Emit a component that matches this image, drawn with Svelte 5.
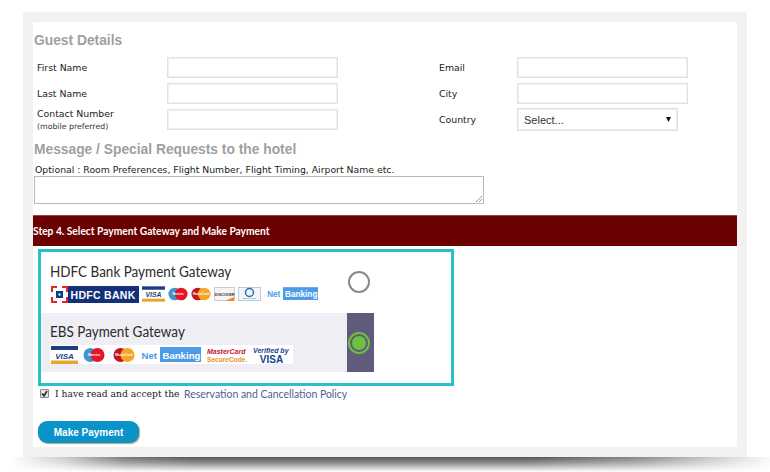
<script>
  const left = [
    { label: 'First Name' },
    { label: 'Last Name' },
    { label: 'Contact Number', note: '(mobile preferred)' }
  ];
  const right = ['Email', 'City'];
</script>

{#snippet visa(w, h)}
  <svg class="logo" width={w} height={h} viewBox="0 0 27 18">
    <rect width="27" height="18" fill="#fff" />
    <rect y="0" width="27" height="4" fill="#1a3f7c" />
    <rect y="14.5" width="27" height="3.5" fill="#e8a72c" />
    <text x="13.5" y="12.5" text-anchor="middle" class="visa-t">VISA</text>
  </svg>
{/snippet}

{#snippet maestro(w)}
  <svg class="logo" width={w} height="18" viewBox="0 0 22 18">
    <circle cx="7.5" cy="9" r="7" fill="#3b97cc" />
    <circle cx="14.5" cy="9" r="7" fill="#e8132a" />
    <text x="11" y="10.2" text-anchor="middle" class="card-t">Maestro</text>
  </svg>
{/snippet}

{#snippet master(w)}
  <svg class="logo" width={w} height="18" viewBox="0 0 22 18">
    <circle cx="7.5" cy="9" r="7" fill="#c5141c" />
    <circle cx="14.5" cy="9" r="7" fill="#f5a623" />
    <text x="11" y="10.2" text-anchor="middle" class="card-t">MasterCard</text>
  </svg>
{/snippet}

{#snippet netbank(w, h)}
  <svg class="logo" width={w} height={h} viewBox="0 0 62 18">
    <rect width="62" height="18" fill="#fff" />
    <rect x="21" y="1" width="41" height="15" fill="#4d9be8" />
    <text x="2.5" y="12.5" class="nb-a">Net</text>
    <text x="23.5" y="12.5" class="nb-b">Banking</text>
  </svg>
{/snippet}

<div class="page">
  <main class="frame">
    <section class="guest">
      <h2>Guest Details</h2>
      <div class="columns">
        <div class="col-left">
          {#each left as row}
            <div class="row-left">
              <label>
                <span>{row.label}</span>
                {#if row.note}<small>{row.note}</small>{/if}
              </label>
              <input type="text" />
            </div>
          {/each}
        </div>
        <div class="col-right">
          {#each right as label}
            <div class="row-right">
              <label>{label}</label>
              <input type="text" />
            </div>
          {/each}
          <div class="row-right">
            <label>Country</label>
            <div class="select">
              <span>Select...</span>
              <svg width="5" height="5" viewBox="0 0 5 5"><path d="M0 0h5L2.5 5z" fill="#111" /></svg>
            </div>
          </div>
        </div>
      </div>
      <h2 class="msg">Message / Special Requests to the hotel</h2>
      <p class="optional">Optional : Room Preferences, Flight Number, Flight Timing, Airport Name etc.</p>
      <div class="textarea">
        <svg width="8" height="8" viewBox="0 0 8 8"><path d="M1 7L7 1M4 7L7 4" stroke="#999" stroke-width="1" /></svg>
      </div>
    </section>

    <h3 class="step"><span>Step 4. Select Payment Gateway and Make Payment</span></h3>

    <section class="gateways">
      <div class="gw gw-a">
        <div class="gw-info">
          <div class="gw-title">HDFC Bank Payment Gateway</div>
          <div class="strip strip-a">
            <svg class="logo" width="88" height="17" viewBox="0 0 88 17">
              <rect width="17" height="17" fill="#fff" />
              <path d="M0 0h6v2H2v4H0zM11 0h6v6h-2V2h-4zM0 11h2v4h4v2H0zM15 11h2v6h-6v-2h4z" fill="#e3242b" />
              <rect x="5" y="5" width="7" height="7" fill="#103a84" />
              <rect x="7.5" y="7.5" width="2" height="2" fill="#fff" />
              <rect x="17" width="71" height="17" fill="#14307a" />
              <text x="19.5" y="12.8" class="hdfc-t">HDFC BANK</text>
            </svg>
            {@render visa(23, 16)}
            {@render maestro(20)}
            {@render master(20)}
            <svg class="logo" width="21" height="16" viewBox="0 0 21 16">
              <rect x=".5" y="1.5" width="20" height="13" fill="#f4f4f4" stroke="#ccc" />
              <text x="10.5" y="9.6" text-anchor="middle" class="disc-t">DISCOVER</text>
              <path d="M11 15L20 11V15z" fill="#ee8a1c" />
            </svg>
            <svg class="logo" width="23" height="16" viewBox="0 0 23 16">
              <rect x=".5" y="1.5" width="22" height="13" fill="#f2f6fa" stroke="#bcd" />
              <circle cx="11.5" cy="6.5" r="4" fill="none" stroke="#2a6ea8" stroke-width="1.5" />
              <text x="11.5" y="13" text-anchor="middle" class="din-t">Diners Club</text>
            </svg>
            <span class="nudge1">{@render netbank(53, 16)}</span>
          </div>
        </div>
        <div class="gw-radio">
          <span class="radio"></span>
        </div>
      </div>
      <div class="gw gw-b">
        <div class="gw-info">
          <div class="gw-title">EBS Payment Gateway</div>
          <div class="strip strip-b">
            {@render visa(27, 18)}
            {@render maestro(22)}
            <span class="nudge8">{@render master(22)}</span>
            <span class="nudge4">{@render netbank(62, 18)}</span>
            <span class="nudge6">
              <svg class="logo" width="40" height="18" viewBox="0 0 40 18">
                <text x="0" y="8" class="msc-a">MasterCard</text>
                <text x="0" y="16" class="msc-b">SecureCode.</text>
              </svg>
            </span>
            <span class="nudge6">
              <svg class="logo" width="37" height="18" viewBox="0 0 37 18">
                <text x="0" y="7" class="vbv-a">Verified by</text>
                <text x="18.5" y="16.5" text-anchor="middle" class="vbv-b">VISA</text>
              </svg>
            </span>
          </div>
        </div>
        <div class="gw-radio on">
          <span class="radio sel"><i></i></span>
        </div>
      </div>
    </section>

    <div class="accept">
      <span class="check">
        <svg width="7" height="7" viewBox="0 0 7 7"><path d="M1 3.5L3 5.8L6 1" fill="none" stroke="#222" stroke-width="1.6" /></svg>
      </span>
      <span class="accept-text">I have read and accept the</span>
      <a href="#policy">Reservation and Cancellation Policy</a>
    </div>

    <button class="pay">Make Payment</button>
  </main>
  <div class="shadow"></div>
</div>

<style>
  :global(body) { margin: 0; background: #fff; }
  .page { width: 770px; height: 472px; overflow: hidden; box-sizing: border-box; padding: 12px 23px 0; font-family: "DejaVu Sans", sans-serif; }
  .frame { box-sizing: border-box; width: 724px; height: 445px; border: 10px solid #f2f2f2; background: #fff; }
  .shadow { height: 15px; margin: 0 -30px 0 -13px; background: linear-gradient(to bottom, rgba(255,255,255,0) 0, rgba(255,255,255,.35) 40%, #fff 100%), linear-gradient(to right, #fff 0, #ccc 7%, #777 15%, #555 24%, #555 68%, #888 82%, #ccc 92%, #fff 100%); }

  .guest { height: 193px; box-sizing: border-box; padding: 11px 0 0 1px; }
  h2 { margin: 0; font: bold 13.8px/16px "Liberation Sans", sans-serif; color: #9f9f9f; }
  .columns { display: flex; margin-top: 8px; }
  .col-left { width: 405px; display: flex; flex-direction: column; gap: 5px; }
  .col-right { display: flex; flex-direction: column; gap: 5px; }
  .row-left, .row-right { display: flex; align-items: center; height: 21px; }
  label { display: block; font-size: 9.35px; line-height: 12px; color: #222; }
  label small { display: block; font-size: 7.8px; line-height: 11px; color: #333; margin-top: 1px; }
  label span { display: block; }
  .row-left label { width: 130px; padding-left: 3px; box-sizing: border-box; margin-right: 3px; }
  .row-right label { width: 78px; }
  input { box-sizing: border-box; width: 171px; height: 21px; border: 1px solid #e2e2e2; outline: 1px solid #f0f0f0; outline-offset: -2px; background: #fff; padding: 0; }
  .select { box-sizing: border-box; width: 161px; height: 23px; display: flex; align-items: center; justify-content: space-between; padding: 0 6px 0 6px; border: 1px solid #dfdfdf; outline: 1px solid #f0f0f0; outline-offset: -2px; font: 11px "Liberation Sans", sans-serif; color: #333; }
  .msg { margin-top: 12px; }
  .optional { margin: 6px 0 0 1px; font-size: 9.3px; line-height: 12px; color: #222; }
  .textarea { box-sizing: border-box; width: 450px; height: 28px; margin-top: 0; border: 1px solid #b8b8b8; display: flex; align-items: flex-end; justify-content: flex-end; }

  .step { margin: 0; height: 31px; box-sizing: border-box; background: #6b0000; border-top: 1px solid #8c4a4a; color: #fff; font: bold 11.5px/30px Lato, sans-serif; }
  .step span { display: inline-block; transform: scaleX(.89); transform-origin: 0 50%; white-space: nowrap; }

  .gateways { box-sizing: border-box; width: 416px; height: 137px; margin: 3px 0 0 5px; border: 3px solid #2bc0c9; background: #fff; }
  .gw { display: flex; }
  .gw-a { height: 61px; }
  .gw-b { height: 59px; }
  .gw-info { width: 306px; box-sizing: border-box; padding-left: 9px; }
  .gw-b .gw-info { background: #eeeef4; }
  .gw-title { font: 14.5px/18px Lato, sans-serif; color: #2c2c2c; padding-top: 11px; transform: scaleX(.93); transform-origin: 0 50%; white-space: nowrap; }
  .gw-b .gw-title { padding-top: 10px; }
  .strip { display: flex; align-items: center; background: #fff; box-sizing: border-box; padding-left: 1px; }
  .strip-a { margin-top: 4px; height: 18px; width: 268px; gap: 3px; }
  .strip-b { margin-top: 4px; height: 19px; width: 243px; gap: 5px; }
  .strip span { display: block; }
  .nudge1 { margin-left: 1px; }
  .nudge8 { margin-left: 3px; }
  .nudge4 { margin-left: -1px; }
  .nudge6 { margin-left: 1px; }
  .logo { display: block; flex: none; }
  .gw-radio { width: 27px; display: flex; align-items: center; justify-content: center; box-sizing: border-box; padding-right: 3px; }
  .gw-a .gw-radio { padding-bottom: 1px; }
  .gw-radio.on { background: #5f5b7a; }
  .radio { box-sizing: border-box; width: 22px; height: 22px; flex: none; border-radius: 50%; border: 2px solid #8a8a8a; display: block; }
  .radio.sel { border-color: #6cc23f; display: flex; align-items: center; justify-content: center; background: #5f5b7a; }
  .radio.sel i { display: block; width: 14px; height: 14px; border-radius: 50%; background: #6cc23f; }

  .accept { display: flex; align-items: center; margin: 1px 0 0 7px; height: 12px; color: #222; }
  .check { box-sizing: border-box; width: 9px; height: 9px; margin-right: 6px; border: 1px solid #888; border-radius: 1px; background: #e6e6e6; display: flex; align-items: center; justify-content: center; }
  .accept-text { font: 9.2px "DejaVu Serif", serif; margin-right: 4px; white-space: nowrap; }
  .accept a { color: #4f5f90; text-decoration: none; font: 11.5px Lato, sans-serif; transform: scaleX(.91); transform-origin: 0 50%; white-space: nowrap; }

  .pay { display: block; box-sizing: border-box; width: 101px; height: 22px; margin: 22px 0 0 5px; padding: 0; border: 0; border-radius: 9px; background: #0a93c8; box-shadow: 1px 1px 1px #b8a878; color: #fff; font: bold 10px "Liberation Sans", sans-serif; }

  .visa-t { font: italic bold 8px "Liberation Sans", sans-serif; fill: #1a3f7c; }
  .card-t { font: bold 3.2px "Liberation Sans", sans-serif; fill: #fff; }
  .nb-a { font: bold 9.6px "Liberation Sans", sans-serif; fill: #4d9be8; }
  .nb-b { font: bold 9.6px "Liberation Sans", sans-serif; fill: #fff; }
  .hdfc-t { font: bold 10.5px "Liberation Sans", sans-serif; fill: #fff; letter-spacing: .3px; }
  .disc-t { font: bold 3.8px "Liberation Sans", sans-serif; fill: #333; }
  .din-t { font: 2.5px "Liberation Sans", sans-serif; fill: #2a6ea8; }
  .msc-a { font: italic bold 7px "Liberation Sans", sans-serif; fill: #c8102e; }
  .msc-b { font: bold 6.6px "Liberation Sans", sans-serif; fill: #e8901c; }
  .vbv-a { font: italic bold 7px "Liberation Sans", sans-serif; fill: #1a3f8c; }
  .vbv-b { font: bold 10px "Liberation Sans", sans-serif; fill: #1a3f8c; }
</style>
